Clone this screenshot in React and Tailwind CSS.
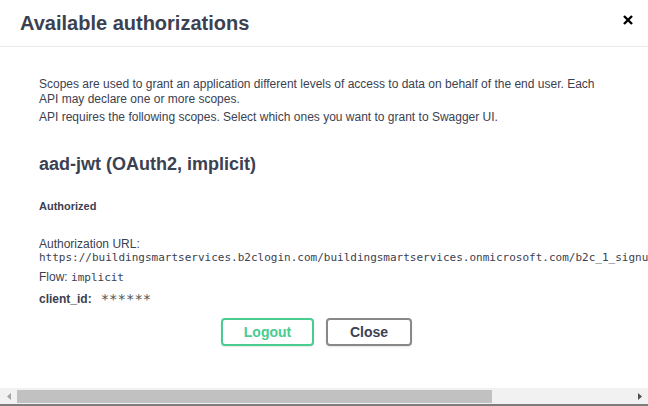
export default function App() {
  const sans = { fontFamily: '"Liberation Sans", Arial, sans-serif' };
  const mono = { fontFamily: '"DejaVu Sans Mono", "Liberation Mono", monospace' };
  return (
    <div className="w-[648px] h-[406px] bg-white flex flex-col overflow-hidden text-[#3b4151]" style={sans}>
      <div className="flex items-start justify-between border-b border-[#ebebeb] pt-[12px] pb-[11px] pl-[20px] pr-[15px]">
        <h3 className="text-[20px] leading-[23px] font-bold text-[#3b4151]">Available authorizations</h3>
        <div className="mt-[3px]">
          <svg width="10" height="10" viewBox="0 0 10 10">
            <path d="M1 1 L9 9 M9 1 L1 9" stroke="#000" strokeWidth="2.4" strokeLinecap="butt" />
          </svg>
        </div>
      </div>
      <div className="flex-1 overflow-hidden pl-[39px] pt-[30px] flex flex-col">
        <p className="text-[12px] leading-[15px] whitespace-nowrap">
          Scopes are used to grant an application different levels of access to data on behalf of the end user. Each
          <br />
          API may declare one or more scopes.
        </p>
        <p className="mt-[3px] text-[12px] leading-[15px] whitespace-nowrap">
          API requires the following scopes. Select which ones you want to grant to Swagger UI.
        </p>
        <h4 className="mt-[29px] text-[18px] leading-[21px] font-bold whitespace-nowrap">aad-jwt (OAuth2, implicit)</h4>
        <h6 className="mt-[25px] text-[11px] leading-[13px] font-bold">Authorized</h6>
        <p className="mt-[24px] text-[12px] leading-[14px]">Authorization URL:</p>
        <div className="text-[11px] leading-[14px] whitespace-nowrap" style={mono}>
          https://buildingsmartservices.b2clogin.com/buildingsmartservices.onmicrosoft.com/b2c_1_signupsignin/oauth2/v2.0/authorize
        </div>
        <p className="mt-[5px] text-[12px] leading-[14px]">
          Flow: <code className="text-[11px]" style={mono}>implicit</code>
        </p>
        <div className="mt-[7px] flex items-center text-[12px] leading-[14px]">
          <span className="font-bold">client_id:</span>
          <span className="ml-[9px] text-[14px] text-[#555]" style={mono}>******</span>
        </div>
        <div className="mt-[12px] flex gap-[12px] pl-[182px]">
          <button className="w-[93px] h-[28px] border-2 border-[#49cc90] rounded-[4px] text-[14px] font-bold text-[#49cc90] shadow-[0_1px_2px_rgba(0,0,0,0.1)]" style={sans}>
            Logout
          </button>
          <button className="w-[86px] h-[28px] border-2 border-[#888888] rounded-[4px] text-[14px] font-bold text-[#3b4151] shadow-[0_1px_2px_rgba(0,0,0,0.1)]" style={sans}>
            Close
          </button>
        </div>
      </div>
      <div className="h-[16px] bg-[#f1f1f1] flex items-center shrink-0">
        <div className="w-[17px] h-[16px] flex items-center justify-center">
          <svg width="4" height="7" viewBox="0 0 4 7"><path d="M4 0 L0 3.5 L4 7 Z" fill="#a3a3a3" /></svg>
        </div>
        <div className="w-[475px] h-[13px] bg-[#c1c1c1]" />
        <div className="flex-1" />
        <div className="w-[17px] h-[16px] flex items-center justify-center">
          <svg width="4" height="7" viewBox="0 0 4 7"><path d="M0 0 L4 3.5 L0 7 Z" fill="#505050" /></svg>
        </div>
      </div>
      <div className="h-[2px] bg-[#7d7d7d] shrink-0" />
    </div>
  );
}
